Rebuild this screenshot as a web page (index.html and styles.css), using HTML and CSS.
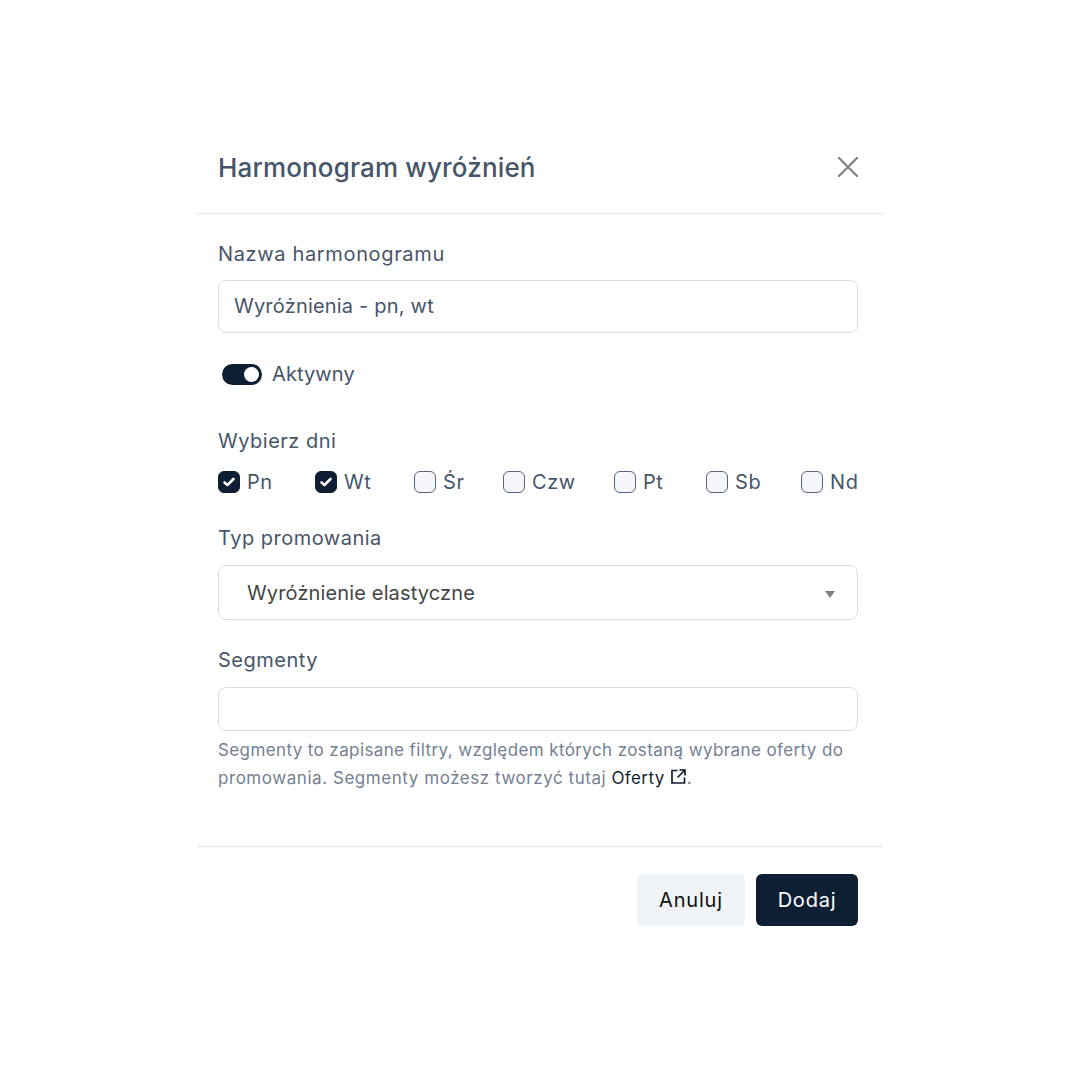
FILE: index.html
```html
<!DOCTYPE html>
<html lang="pl">
<head>
    <meta charset="UTF-8">
    <meta name="viewport" content="width=device-width, initial-scale=1.0">
    <title>Harmonogram wyróżnień</title>
    <link rel="stylesheet" href="styles.css">
</head>
<body>
    <div class="modal">
        <div class="modal-header">
            <h2 class="modal-title">Harmonogram wyróżnień</h2>
            <button class="close-btn" aria-label="Zamknij">
                <svg width="22" height="22" viewBox="0 0 22 22" fill="none" stroke="#808080" stroke-width="2.2" stroke-linecap="round"><path d="M2 2 L20 20 M20 2 L2 20"/></svg>
            </button>
        </div>

        <div class="modal-body">
            <label class="field-label name-label">Nazwa harmonogramu</label>
            <div class="text-input name-input">Wyróżnienia - pn, wt</div>

            <div class="toggle-row">
                <span class="toggle"><span class="toggle-knob"></span></span>
                <span class="toggle-label">Aktywny</span>
            </div>

            <div class="field-label days-label">Wybierz dni</div>
            <div class="days">
                <label class="day"><span class="box checked"><svg width="16" height="16" viewBox="0 0 16 16" fill="none" stroke="#fff" stroke-width="2.6" stroke-linecap="round" stroke-linejoin="round"><path d="M3.5 8.5 L6.5 11 L12.5 5"/></svg></span>Pn</label>
                <label class="day"><span class="box checked"><svg width="16" height="16" viewBox="0 0 16 16" fill="none" stroke="#fff" stroke-width="2.6" stroke-linecap="round" stroke-linejoin="round"><path d="M3.5 8.5 L6.5 11 L12.5 5"/></svg></span>Wt</label>
                <label class="day"><span class="box"></span>Śr</label>
                <label class="day"><span class="box"></span>Czw</label>
                <label class="day"><span class="box"></span>Pt</label>
                <label class="day"><span class="box"></span>Sb</label>
                <label class="day"><span class="box"></span>Nd</label>
            </div>

            <div class="field-label type-label">Typ promowania</div>
            <div class="select-box">
                <span>Wyróżnienie elastyczne</span>
                <span class="select-arrow"></span>
            </div>

            <div class="field-label segment-label">Segmenty</div>
            <div class="text-input segment-input"></div>
            <p class="help">Segmenty to zapisane filtry, względem których zostaną wybrane oferty do <span class="help-wide">promowania. Segmenty możesz tworzyć tutaj</span> <a class="help-link">Oferty</a><svg class="link-icon" width="17" height="17" viewBox="0 0 17 17" fill="none" stroke="#0f1f33" stroke-width="1.7"><path d="M7.5 2.5 H2 V15 H14.5 V9.5 M9.5 2 H15 V7.5 M15 2 L7.5 9.5"/></svg>.</p>
        </div>

        <div class="modal-footer">
            <button class="btn btn-cancel">Anuluj</button>
            <button class="btn btn-primary">Dodaj</button>
            <span class="resize-mark"></span>
        </div>
    </div>
</body>
</html>
```

FILE: styles.css
```css
body {
    margin: 0;
    background: #fff;
    font-family: Inter, "Noto Sans", sans-serif;
    color: #475569;
}
.modal {
    width: 686px;
    margin: 130px 0 0 197px;
}
.modal-header {
    height: 84px;
    box-sizing: border-box;
    padding: 0 24px 8px 21px;
    display: flex;
    align-items: center;
    justify-content: space-between;
    border-bottom: 1px solid #e5e7eb;
}
.modal-title {
    margin: 0;
    font-size: 26px;
    font-weight: 500;
    letter-spacing: 0.15px;
    color: #475569;
}
.close-btn {
    border: none;
    background: none;
    padding: 0 0 2px;
    display: flex;
}
.modal-body {
    padding: 0 25px 0 21px;
    height: 633px;
    box-sizing: border-box;
    border-bottom: 1px solid #e5e7eb;
}
.field-label {
    display: block;
    font-size: 20px;
    line-height: 26px;
    letter-spacing: 0.5px;
}
.name-label {
    padding-top: 27px;
    letter-spacing: 0.65px;
}
.text-input {
    box-sizing: border-box;
    border: 1px solid #d9dde3;
    border-radius: 8px;
    font-size: 20px;
    letter-spacing: 0.2px;
    padding: 0 15px;
    display: flex;
    align-items: center;
}
.name-input {
    height: 53px;
    margin-top: 13px;
    padding-bottom: 2px;
}
.toggle-row {
    display: flex;
    align-items: center;
    margin-top: 31px;
    padding-left: 4px;
    height: 21px;
    font-size: 20px;
    letter-spacing: 0.1px;
}
.toggle {
    width: 40px;
    height: 21px;
    border-radius: 11px;
    background: #0f1f33;
    display: flex;
    align-items: center;
    justify-content: flex-end;
    padding-right: 3px;
    box-sizing: border-box;
}
.toggle-knob {
    width: 15px;
    height: 15px;
    border-radius: 50%;
    background: #fff;
}
.toggle-label {
    margin-left: 10px;
    padding-bottom: 2px;
}
.days-label { margin-top: 43px; }
.days {
    display: grid;
    grid-template-columns: 97px 99px 89px 111px 92px 95px auto;
    margin-top: 16px;
}
.day {
    display: flex;
    align-items: center;
    gap: 7px;
    font-size: 20px;
    letter-spacing: 0.6px;
    height: 23px;
}
.box {
    width: 22px;
    height: 22px;
    box-sizing: border-box;
    border: 1.5px solid #56657a;
    border-radius: 6px;
    background: #f4f6f9;
    display: flex;
    align-items: center;
    justify-content: center;
}
.box.checked {
    background: #0f1f33;
    border-color: #0f1f33;
}
.type-label { margin-top: 32px; }
.select-box {
    box-sizing: border-box;
    height: 55px;
    margin-top: 14px;
    border: 1px solid #d9dde3;
    border-radius: 8px;
    padding: 0 22px 0 28px;
    display: flex;
    align-items: center;
    justify-content: space-between;
    font-size: 20px;
    letter-spacing: 0.14px;
    color: #444;
}
.select-arrow {
    width: 0;
    height: 0;
    margin-top: 3px;
    border-left: 5px solid transparent;
    border-right: 5px solid transparent;
    border-top: 7px solid #808080;
}
.segment-label { margin-top: 27px; }
.segment-input {
    height: 44px;
    margin-top: 14px;
}
.help {
    margin: 5px 0 0;
    font-size: 17px;
    line-height: 28px;
    letter-spacing: 0.39px;
    color: #748092;
}
.help-wide {
    letter-spacing: 0.55px;
}
.help-link {
    color: #0f1f33;
}
.link-icon {
    margin-left: 5px;
    vertical-align: -1px;
}
.modal-footer {
    position: relative;
    display: flex;
    justify-content: flex-end;
    gap: 11px;
    padding: 27px 25px 0 0;
}
.resize-mark {
    position: absolute;
    right: 1px;
    top: 99px;
    width: 1px;
    height: 4px;
    background: #c4c8cc;
}
.btn {
    height: 52px;
    border: none;
    border-radius: 6px;
    font-family: inherit;
    font-size: 20px;
    letter-spacing: 0.8px;
}
.btn-cancel {
    width: 108px;
    background: #f0f3f6;
    color: #111;
}
.btn-primary {
    width: 102px;
    background: #0f1f33;
    color: #fff;
}
```
